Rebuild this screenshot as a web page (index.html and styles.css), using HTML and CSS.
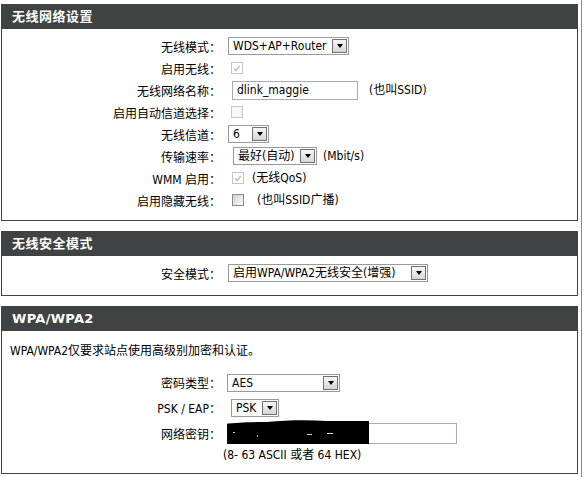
FILE: index.html
```html
<!DOCTYPE html>
<html lang="zh-CN">
<head>
<meta charset="utf-8">
<title>无线设置</title>
<link rel="stylesheet" href="styles.css">
</head>
<body>
<div class="frame">

  <section class="panel">
    <h2 class="panel-head">无线网络设置</h2>
    <div class="panel-body body-wlan">
      <div class="row">
        <span class="lbl">无线模式：</span>
        <span class="sel w-mode ml7"><span class="sel-text">WDS+AP+Router</span><span class="sel-btn"></span></span>
      </div>
      <div class="row">
        <span class="lbl">启用无线：</span>
        <span class="cb cb-dis-on ml10"><svg viewBox="0 0 11 11" width="11" height="11"><polyline points="2.5,5.5 4.5,7.8 8.5,2.5" fill="none" stroke="#b4b4b4" stroke-width="1.3"/></svg></span>
      </div>
      <div class="row">
        <span class="lbl">无线网络名称：</span>
        <span class="inp w-ssid ml11">dlink_maggie</span>
        <span class="note ml11">(也叫SSID)</span>
      </div>
      <div class="row">
        <span class="lbl">启用自动信道选择：</span>
        <span class="cb cb-dis ml10"></span>
      </div>
      <div class="row">
        <span class="lbl">无线信道：</span>
        <span class="sel w-chan ml7"><span class="sel-text">6</span><span class="sel-btn"></span></span>
      </div>
      <div class="row">
        <span class="lbl">传输速率：</span>
        <span class="sel w-rate ml12"><span class="sel-text">最好(自动)</span><span class="sel-btn"></span></span>
        <span class="note ml6">(Mbit/s)</span>
      </div>
      <div class="row">
        <span class="lbl">WMM 启用：</span>
        <span class="cb cb-dis-on ml11"><svg viewBox="0 0 11 11" width="11" height="11"><polyline points="2.5,5.5 4.5,7.8 8.5,2.5" fill="none" stroke="#b4b4b4" stroke-width="1.3"/></svg></span>
        <span class="note ml8">(无线QoS)</span>
      </div>
      <div class="row">
        <span class="lbl">启用隐藏无线：</span>
        <span class="cb cb-on ml11"></span>
        <span class="note ml13">(也叫SSID广播)</span>
      </div>
    </div>
  </section>

  <section class="panel">
    <h2 class="panel-head">无线安全模式</h2>
    <div class="panel-body body-sec">
      <div class="row">
        <span class="lbl">安全模式：</span>
        <span class="sel w-sec ml7"><span class="sel-text">启用WPA/WPA2无线安全(增强)</span><span class="sel-btn"></span></span>
      </div>
    </div>
  </section>

  <section class="panel">
    <h2 class="panel-head head-latin">WPA/WPA2</h2>
    <div class="panel-body body-wpa">
      <p class="desc">WPA/WPA2仅要求站点使用高级别加密和认证。</p>
      <div class="row row-25">
        <span class="lbl">密码类型：</span>
        <span class="sel w-cipher ml6"><span class="sel-text">AES</span><span class="sel-btn"></span></span>
      </div>
      <div class="row row-25">
        <span class="lbl">PSK / EAP：</span>
        <span class="sel w-psk ml10"><span class="sel-text">PSK</span><span class="sel-btn"></span></span>
      </div>
      <div class="row row-26">
        <span class="lbl">网络密钥：</span>
        <span class="key-wrap ml6">
          <span class="inp inp-key"></span>
          <svg class="redact" viewBox="0 0 142 24" width="142" height="24">
            <path d="M0,4 C10,3 20,2 40,2 C60,0 80,-0.5 100,1 L142,1 L142,24 L0,24 Z" fill="#000"/>
            <rect x="6" y="12" width="2" height="1" fill="#d8d8d8"/>
            <rect x="30" y="15" width="1" height="2" fill="#bdbdbd"/>
            <rect x="80" y="14" width="5" height="1" fill="#cfcfcf"/>
            <rect x="100" y="13" width="6" height="1" fill="#e0e0e0"/>
          </svg>
        </span>
      </div>
      <div class="row row-hint">
        <span class="lbl"></span>
        <span class="note ml2">(8- 63 ASCII 或者 64 HEX)</span>
      </div>
    </div>
  </section>

</div>
</body>
</html>
```

FILE: styles.css
```css
html, body {
  margin: 0;
  padding: 0;
  background: #fff;
}

body {
  font-family: "DejaVu Sans Condensed", "Liberation Sans", "Noto Sans CJK SC", sans-serif;
  font-size: 12px;
  color: #000;
}

.frame {
  box-sizing: border-box;
  width: 582px;
  min-height: 477px;
  padding: 4px 0 0 1px;
  border-right: 1px solid #8a8a8a;
}

.panel {
  box-sizing: border-box;
  width: 577px;
  border: 1px solid #404343;
  margin-bottom: 10px;
}

.panel-head {
  margin: 0;
  height: 24px;
  padding-left: 10px;
  background: #404343;
  color: #fff;
  font-family: "DejaVu Sans", "Noto Sans CJK SC", sans-serif;
  font-weight: bold;
  font-size: 13px;
  line-height: 24px;
  letter-spacing: 0.5px;
}

.head-latin {
  letter-spacing: 0.3px;
}

.body-wlan { padding: 6px 0 9px; }
.body-sec  { padding: 6px 0 11px; }
.body-wpa  { padding: 10px 0 9px; }

.row {
  display: flex;
  align-items: center;
  height: 22px;
  white-space: nowrap;
}

.row-25 { height: 25px; }
.row-26 { height: 26px; }
.row-hint { height: 18px; }

.lbl {
  flex: none;
  width: 219px;
  text-align: right;
}

.desc {
  margin: 0 0 9px;
  padding-left: 8px;
  height: 20px;
  line-height: 20px;
}

/* spacing helpers */
.ml2 { margin-left: 2px; }
.ml6 { margin-left: 6px; }
.ml7 { margin-left: 7px; }
.ml8 { margin-left: 8px; }
.ml10 { margin-left: 10px; }
.ml11 { margin-left: 11px; }
.ml12 { margin-left: 12px; }
.ml13 { margin-left: 13px; }

/* select boxes */
.sel {
  box-sizing: border-box;
  display: inline-flex;
  align-items: center;
  justify-content: space-between;
  height: 18px;
  padding: 0 1px 0 4px;
  border: 1px solid #9a9a9a;
  background: #fff;
}

.sel-text {
  line-height: 16px;
}

.sel-btn {
  box-sizing: border-box;
  flex: none;
  display: flex;
  align-items: center;
  justify-content: center;
  width: 15px;
  height: 14px;
  border: 1px solid #707070;
  background: linear-gradient(#f6f6f6, #d6d6d6);
}

.sel-btn::after {
  content: "";
  border-left: 3.5px solid transparent;
  border-right: 3.5px solid transparent;
  border-top: 4px solid #000;
}

.w-mode   { width: 121px; }
.w-chan   { width: 41px; }
.w-rate   { width: 84px; }
.w-sec    { width: 200px; }
.w-cipher { width: 113px; }
.w-psk    { width: 48px; }

/* text inputs */
.inp {
  box-sizing: border-box;
  display: inline-flex;
  align-items: center;
  height: 19px;
  padding: 0 4px;
  border: 1px solid #a5acb2;
  background: #fff;
}

.w-ssid { width: 126px; }

.key-wrap {
  position: relative;
  display: inline-flex;
}

.inp-key {
  width: 230px;
  height: 21px;
}

.redact {
  position: absolute;
  left: 0;
  top: -3px;
}

/* checkboxes */
.cb {
  box-sizing: border-box;
  display: inline-flex;
  align-items: center;
  justify-content: center;
  width: 12px;
  height: 12px;
  border: 1px solid #c2c6ca;
  background: #fff;
}

.cb-dis {
  border-color: #c8c8c8;
  background: #f7f7f7;
}

.cb-on {
  border-color: #8a8a8a;
  background: linear-gradient(135deg, #d4d4d4, #f8f8f8);
}

.note {
  line-height: 16px;
}
```
